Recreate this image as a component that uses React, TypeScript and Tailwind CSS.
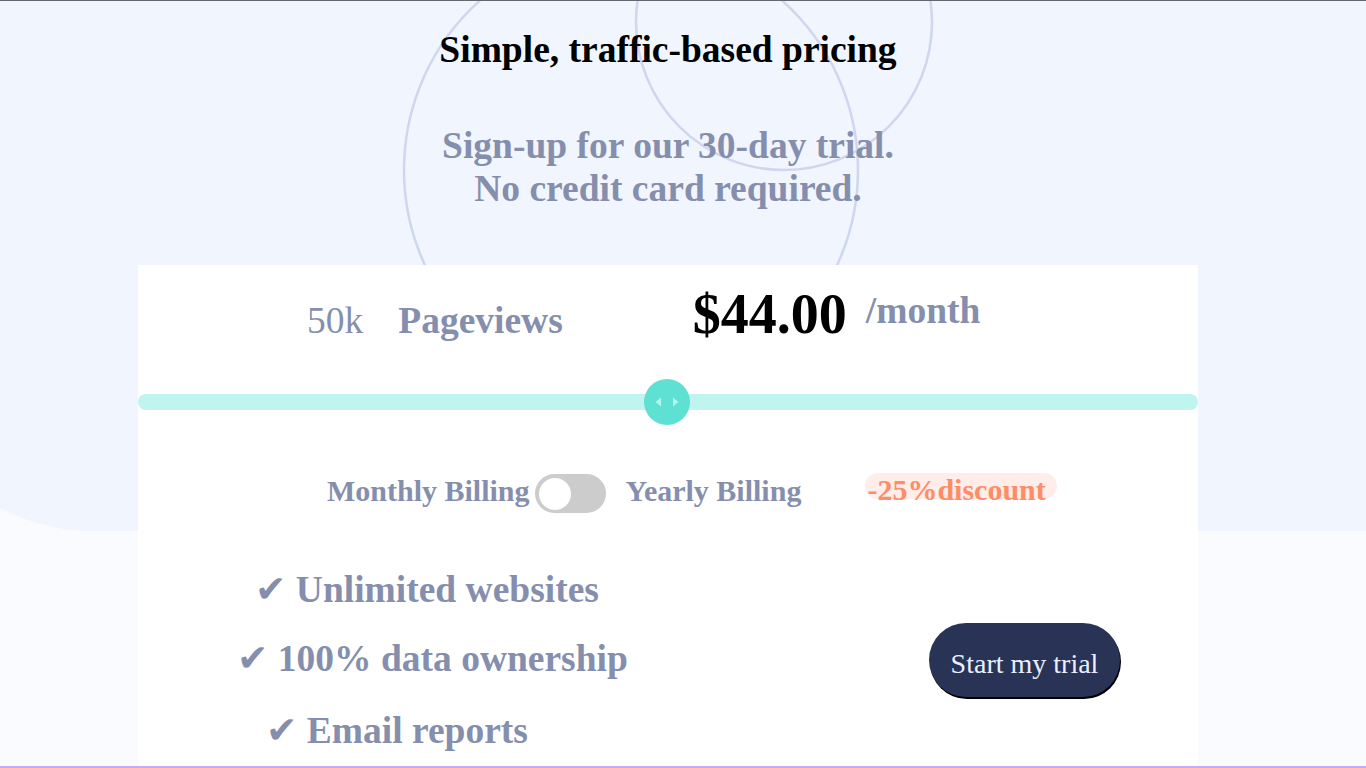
const FEATURES = [
  { text: "Unlimited websites", pad: "pl-[117px]", gap: "" },
  { text: "100% data ownership", pad: "pl-[99px]", gap: "mt-[26px]" },
  { text: "Email reports", pad: "pl-[128px]", gap: "mt-[29px]" },
];

function Circles() {
  return (
    <svg
      className="pointer-events-none absolute left-0 top-0"
      width="1366"
      height="530"
      viewBox="0 0 1366 530"
      fill="none"
      aria-hidden="true"
    >
      <circle cx="631" cy="169" r="227" stroke="#cfd7ef" strokeWidth="2.5" />
      <circle cx="784" cy="21" r="148" stroke="#cfd7ef" strokeWidth="2.5" />
    </svg>
  );
}

function SliderThumb() {
  return (
    <div className="absolute left-[506px] top-0 flex h-[46px] w-[46px] items-center justify-center rounded-full bg-[#5ee0d2]">
      <svg width="24" height="10" viewBox="0 0 24 10" aria-hidden="true">
        <path d="M6 0.5 L0.5 5 L6 9.5 Z" fill="#b3f5ee" />
        <path d="M18 0.5 L23.5 5 L18 9.5 Z" fill="#b3f5ee" />
      </svg>
    </div>
  );
}

export default function App() {
  return (
    <div className="relative min-h-screen overflow-hidden border-t border-[#62666d] bg-[#fafbff] font-['Liberation_Serif','DejaVu_Sans',serif]">
      <div
        className="absolute left-[-107px] right-0 top-0 h-[530px] rounded-bl-[200px] bg-[#f1f5fe]"
        aria-hidden="true"
      />
      <Circles />

      <main className="relative flex flex-col items-center pr-[30px]">
        <h1 className="mt-[27px] text-[37.5px] font-bold leading-[43px] text-black">
          Simple, traffic-based pricing
        </h1>
        <p className="mt-[53px] text-center text-[37.5px] font-bold leading-[43px] text-[#858fad]">
          Sign-up for our 30-day trial.
          <br />
          No credit card required.
        </p>

        <section className="mt-[55px] w-[1060px] bg-white pb-[60px] pt-[17px]">
          <div className="flex items-baseline pl-[169px]">
            <span className="text-[37.5px] leading-[43px] text-[#858fad]">50k</span>
            <span className="ml-[35px] text-[37.5px] font-bold leading-[43px] text-[#858fad]">
              Pageviews
            </span>
            <span className="ml-[130px] text-[56px] font-bold leading-[64px] text-black">
              $44.00
            </span>
            <span className="ml-[19px] mt-[7px] self-start text-[37.5px] font-bold leading-[43px] text-[#858fad]">
              /month
            </span>
          </div>

          <div className="relative mt-[33px] flex h-[46px] items-center">
            <div className="h-4 w-full rounded-full bg-[#bff5ee]" />
            <SliderThumb />
          </div>

          <div className="mt-[48px] flex items-start pl-[189px] text-[30px] font-bold leading-[35px] text-[#858fad]">
            <span>Monthly Billing</span>
            <div className="ml-[5px] mt-[1px] flex h-[39px] w-[71px] items-center rounded-full bg-[#cccccc] px-[4px]">
              <div className="h-8 w-8 rounded-full bg-white" />
            </div>
            <span className="ml-[20px]">Yearly Billing</span>
            <span className="ml-[64px] inline-block h-[26px] rounded-full bg-[#feede8] pl-[2px] pr-[11px] leading-[34px] text-[#ff8c66]">
              <span>-25%</span>
              <span>discount</span>
            </span>
          </div>

          <div className="mt-[55px] flex items-center">
            <ul className="flex flex-col text-[37.5px] font-bold leading-[43px] text-[#858fad]">
              {FEATURES.map((f) => (
                <li key={f.text} className={`${f.pad} ${f.gap}`}>
                  ✔ {f.text}
                </li>
              ))}
            </ul>
            <button className="ml-auto mr-[78px] flex h-[74px] w-[191px] items-center justify-center rounded-full bg-[#293356] pt-[7px] text-[28px] leading-[32px] text-[#eaf0ff] shadow-[1px_2px_0_#000]">
              Start my trial
            </button>
          </div>
        </section>
      </main>

      <div className="fixed inset-x-0 bottom-0 h-[2px] bg-[#c9a9f1]" aria-hidden="true" />
    </div>
  );
}
